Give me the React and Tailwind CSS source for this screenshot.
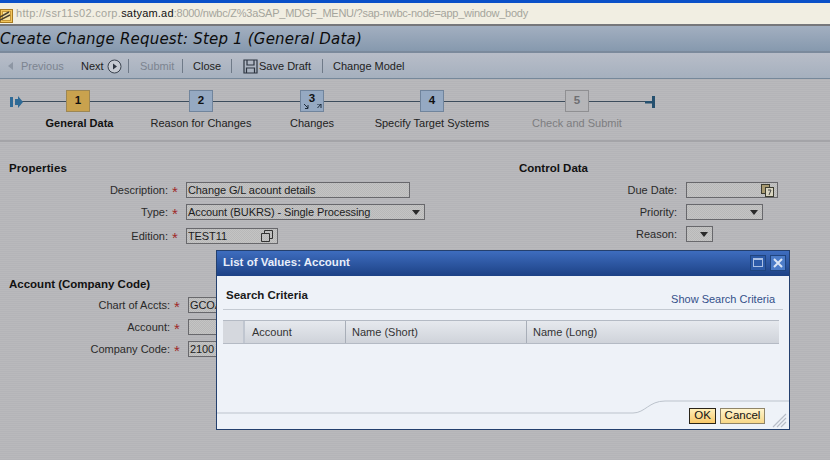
const sans = "font-['Liberation_Sans',Arial,sans-serif]";

const steps = [
  { n: '1', label: 'General Data', width: 'w-[100px]', box: 'bg-[#c9a24e] border-[#9c8654] text-[#111]', text: 'ml-[3px] font-bold text-[#111]' },
  { n: '2', label: 'Reason for Changes', width: 'w-[146px]', box: 'bg-[#95a9c2] border-[#70849c] text-[#111]', text: 'text-[#222]' },
  { n: '3', label: 'Changes', width: 'w-[76px]', box: 'bg-[#95a9c2] border-[#70849c] text-[#111]', text: 'text-[#222]', sub: true },
  { n: '4', label: 'Specify Target Systems', width: 'w-[164px]', box: 'bg-[#95a9c2] border-[#70849c] text-[#111]', text: 'text-[#222]' },
  { n: '5', label: 'Check and Submit', width: 'w-[126px]', box: 'bg-[#b5b5b8] border-[#8f8f92] text-[#6f6f72]', text: 'text-[#7d7d80]' },
];

function Step({ step }) {
  return (
    <div className={`${step.width} flex flex-col items-center`}>
      <div className={`relative w-[24px] h-[22px] border flex items-center justify-center text-[11.5px] font-bold leading-none ${step.box}`}>
        <span className={step.sub ? 'mb-[4px]' : ''}>{step.n}</span>
        {step.sub && (
          <svg className="absolute left-[3px] bottom-[1px]" width="18" height="6" viewBox="0 0 18 6">
            <path d="M0 0 L4 4 M4 1 V4.500 H1 M17 0 L13 0 M17 0 V4 M17 0 L13.500 4" stroke="#1d2b3a" strokeWidth="1" fill="none" />
          </svg>
        )}
      </div>
      <div className={`mt-[4px] text-[11px] leading-[14px] whitespace-nowrap ${step.text}`}>{step.label}</div>
    </div>
  );
}

function Field({ label, required, labelWidth, children }) {
  return (
    <div className="flex items-center h-[16px]">
      <div className={`${labelWidth} text-right text-[11px] text-[#2a2a2a] whitespace-nowrap`}>{label}</div>
      <div className="w-[18px] pl-[4px] text-[15px] leading-none text-[#a02828] h-[12px]">{required ? '*' : ''}</div>
      {children}
    </div>
  );
}

function Box({ width, children }) {
  return (
    <div className={`${width} h-[16px] shrink-0 border border-[#68686c] bg-[repeating-conic-gradient(#c4c4c4_0_25%,#b8b8b8_0_50%)] bg-[length:2px_2px] flex items-center justify-between pl-[1px] pr-[4px] text-[11px] tracking-[-0.1px] leading-none text-[#1c1c1c] whitespace-nowrap overflow-hidden`}>
      {children}
    </div>
  );
}

function Caret() {
  return <span className="w-0 h-0 border-l-[4px] border-r-[4px] border-t-[5px] border-l-transparent border-r-transparent border-t-[#2a2a2a]" />;
}

function Separator() {
  return <span className="block w-px h-[14px] bg-[#6f7a88]" />;
}

export default function App() {
  return (
    <div className={`relative w-[830px] h-[460px] overflow-hidden bg-[#b6b6ba] bg-[repeating-linear-gradient(0deg,#b4b4b8_0px,#b4b4b8_1px,#b9b9bc_1px,#b9b9bc_2px)] ${sans}`}>
      {/* browser bar */}
      <div className="h-[3px] bg-[#0a50c8]" />
      <div className="h-[21px] bg-[#f1eee2] flex items-center text-[11px] leading-none whitespace-nowrap text-[#a5a59c]">
        <svg className="shrink-0 mt-[4px]" width="13" height="14" viewBox="0 0 13 14">
          <rect x="0.500" y="0.500" width="12" height="13" fill="#f3c65c" stroke="#a87a20" />
          <rect x="2.500" y="2.500" width="8" height="9" fill="#f8e2a0" stroke="#c89838" />
          <path d="M0 8 L9 3 M0 11 L10 6" stroke="#4a4030" strokeWidth="1.500" />
        </svg>
        <span className="ml-[3px] tracking-[0.3px]">http://ssr11s02.corp.</span>
        <span className="text-[#111] tracking-[0.2px]">satyam.ad</span>
        <span className="tracking-[-0.25px]">:8000/nwbc/Z%3aSAP_MDGF_MENU/?sap-nwbc-node=app_window_body</span>
      </div>
      <div className="h-[2px] bg-[#77777a]" />

      {/* title */}
      <div className="h-[27px] pt-[2px] bg-gradient-to-b from-[#a3afc0] to-[#8699ae] border-b-2 border-[#7b8a9c] flex items-center text-[15px] italic text-[#0c0c0c] font-['DejaVu_Sans',Verdana,sans-serif] whitespace-nowrap tracking-[0.2px]">
        Create Change Request: Step 1 (General Data)
      </div>

      {/* toolbar */}
      <div className="h-[26px] pt-[1px] bg-gradient-to-b from-[#b8bdc8] to-[#a5b0be] border-b border-[#76889a] flex items-center text-[11px] text-[#222] whitespace-nowrap">
        <span className="ml-[8px] w-0 h-0 border-y-[4px] border-r-[5px] border-y-transparent border-r-[#8d96a3]" />
        <span className="ml-[8px] w-[42px] text-[#7c8490]">Previous</span>
        <span className="ml-[18px] w-[23px]">Next</span>
        <svg className="ml-[3px]" width="15" height="15" viewBox="0 0 15 15">
          <circle cx="7.500" cy="7.500" r="6.500" fill="#c5cad2" stroke="#3c4450" />
          <path d="M6 4.500 L10 7.500 L6 10.500 Z" fill="#2c3440" />
        </svg>
        <span className="ml-[6px]"><Separator /></span>
        <span className="ml-[11px] w-[32px] text-[#7c8490]">Submit</span>
        <span className="ml-[10px]"><Separator /></span>
        <span className="ml-[10px] w-[28px]">Close</span>
        <span className="ml-[10px]"><Separator /></span>
        <svg className="ml-[11px]" width="15" height="15" viewBox="0 0 15 15">
          <path d="M1 1 H14 V14 H1 Z M4 1 V6 H11 V1 M3.500 14 V9 H11.500 V14" fill="none" stroke="#2c3440" strokeWidth="1.200" />
        </svg>
        <span className="ml-[1px] w-[53px]">Save Draft</span>
        <span className="ml-[10px]"><Separator /></span>
        <span className="ml-[10px]">Change Model</span>
      </div>

      {/* roadmap */}
      <div className="relative h-[63px] border-b-2 border-[#a4a4a8] pt-[11px] pl-[28px] flex items-start">
        <div className="absolute left-[22px] top-[22px] w-[626px] h-px bg-[#3c4c5c]" />
        <svg className="absolute left-[10px] top-[17px]" width="13" height="12" viewBox="0 0 13 12">
          <path d="M0 1 H3 V11 H0 Z M5 3 H8 V0 L13 6 L8 12 V9 H5 Z" fill="#2f6a96" />
        </svg>
        <svg className="absolute left-[645px] top-[17px]" width="11" height="12" viewBox="0 0 11 12">
          <path d="M0 5 H7 V0 H10 V12 H7 V7.500 H0 Z" fill="#25506f" />
        </svg>
        {steps.map((step) => (
          <div key={step.n} className="relative">
            <Step step={step} />
          </div>
        ))}
      </div>

      {/* form */}
      <div className="flex pt-[18px]">
        <div className="w-[519px] shrink-0">
          <div className="pl-[9px] text-[11.5px] tracking-[0.1px] leading-[16px] font-bold text-[#111]">Properties</div>
          <div className="mt-[6px] flex flex-col gap-[6px]">
            <Field label="Description:" required labelWidth="w-[168px]">
              <Box width="w-[224px]">Change G/L acount details</Box>
            </Field>
            <Field label="Type:" required labelWidth="w-[168px]">
              <Box width="w-[239px]">Account (BUKRS) - Single Processing<Caret /></Box>
            </Field>
            <div className="mt-[2px]">
              <Field label="Edition:" required labelWidth="w-[168px]">
                <Box width="w-[92px]">
                  TEST11
                  <svg width="12" height="12" viewBox="0 0 12 12">
                    <path d="M3.500 0.500 H11.500 V8.500 H9 M0.500 3.500 H8.500 V11.500 H0.500 Z M3.500 0.500 V3.500" fill="none" stroke="#333" />
                  </svg>
                </Box>
              </Field>
            </div>
          </div>

          <div className="mt-[32px] pl-[9px] text-[11.5px] leading-[16px] font-bold text-[#111]">Account (Company Code)</div>
          <div className="mt-[5px] flex flex-col gap-[6px]">
            <Field label="Chart of Accts:" required labelWidth="w-[170px]">
              <Box width="w-[80px]">GCOA</Box>
            </Field>
            <Field label="Account:" required labelWidth="w-[170px]">
              <Box width="w-[80px]"></Box>
            </Field>
            <Field label="Company Code:" required labelWidth="w-[170px]">
              <Box width="w-[80px]">2100</Box>
            </Field>
          </div>
        </div>

        <div className="flex-1">
          <div className="text-[11.5px] leading-[16px] font-bold text-[#111]">Control Data</div>
          <div className="mt-[6px] flex flex-col gap-[6px]">
            <Field label="Due Date:" labelWidth="w-[158px]">
              <div className="-ml-[9px]">
                <Box width="w-[92px]">
                  <span />
                  <svg width="13" height="13" viewBox="0 0 13 13" className="-mr-[1px]">
                    <rect x="0.500" y="0.500" width="8" height="9" fill="#a89a70" stroke="#3c3c30" />
                    <rect x="4.500" y="3.500" width="8" height="9" fill="#d8d4c0" stroke="#3c3c30" />
                    <path d="M7 6 H10 L8 11" stroke="#444" fill="none" />
                  </svg>
                </Box>
              </div>
            </Field>
            <Field label="Priority:" labelWidth="w-[158px]">
              <div className="-ml-[9px]">
                <Box width="w-[77px]"><span /><Caret /></Box>
              </div>
            </Field>
            <Field label="Reason:" labelWidth="w-[158px]">
              <div className="-ml-[9px]">
                <Box width="w-[27px]"><span /><Caret /></Box>
              </div>
            </Field>
          </div>
        </div>
      </div>

      {/* value help dialog */}
      <div className="absolute left-[216px] top-[250px] w-[574px] h-[180px] border border-[#24406e] bg-[#eef2f8] flex flex-col">
        <div className="h-[25px] shrink-0 bg-gradient-to-b from-[#3e6dbf] to-[#1d4286] flex items-center pl-[6px] pr-[3px] pb-[2px] justify-between">
          <span className="text-[11.5px] font-bold text-[#e8eefa]">List of Values: Account</span>
          <div className="flex gap-[4px]">
            <div className="w-[16px] h-[16px] bg-[#2d5ba8] border border-[#20457f] flex items-center justify-center">
              <span className="w-[10px] h-[9px] border border-[#aac0e4] border-t-2" />
            </div>
            <div className="w-[16px] h-[16px] bg-[#4c7cc8] border border-[#20457f] flex items-center justify-center">
              <svg width="10" height="10" viewBox="0 0 10 10"><path d="M1 1 L9 9 M9 1 L1 9" stroke="#dbe6f6" strokeWidth="2" /></svg>
            </div>
          </div>
        </div>

        <div className="mx-[6px] h-[34px] flex items-end justify-between border-b border-[#c4cad2] pb-[2px] pl-[3px] pr-[8px]">
          <span className="text-[11.5px] font-bold text-[#1a1a1a] leading-[16px] mb-[4px]">Search Criteria</span>
          <span className="text-[11px] text-[#33508a] leading-[16px]">Show Search Criteria</span>
        </div>

        <div className="ml-[6px] mr-[10px] mt-[10px] h-[24px] border-y border-[#b4bac4] bg-gradient-to-b from-[#e6e9ee] to-[#cfd3da] flex text-[11px] text-[#333] items-center">
          <div className="w-[22px] h-full border-r-2 border-[#c0c6d0] bg-[#d5d8de]" />
          <div className="w-[101px] h-full border-r border-[#a8aeb8] pl-[7px] flex items-center">Account</div>
          <div className="w-[181px] h-full border-r border-[#a8aeb8] pl-[6px] flex items-center">Name (Short)</div>
          <div className="flex-1 pl-[6px]">Name (Long)</div>
        </div>

        <div className="flex-1 relative">
          <svg className="absolute left-0 bottom-0" width="572" height="34" viewBox="0 0 572 34">
            <path d="M0 18 H416 C 428 18, 432 6, 448 6 H572" fill="none" stroke="#bcc3cc" />
          </svg>
          <div className="absolute right-[24px] bottom-[5px] flex gap-[4px] text-[11.5px] text-[#111]">
            <button className="w-[27px] h-[16px] leading-none border border-[#2a2418] bg-gradient-to-b from-[#ffefb8] to-[#f8c868]">OK</button>
            <button className="w-[45px] h-[16px] leading-none border border-[#8f8468] bg-gradient-to-b from-[#fff4cc] to-[#f8d888]">Cancel</button>
          </div>
          <svg className="absolute right-[2px] bottom-[1px]" width="15" height="15" viewBox="0 0 15 15">
            <path d="M1 14 L14 1 M5 14 L14 5 M9 14 L14 9" stroke="#b8bec8" strokeWidth="1.200" />
          </svg>
        </div>
      </div>
    </div>
  );
}
